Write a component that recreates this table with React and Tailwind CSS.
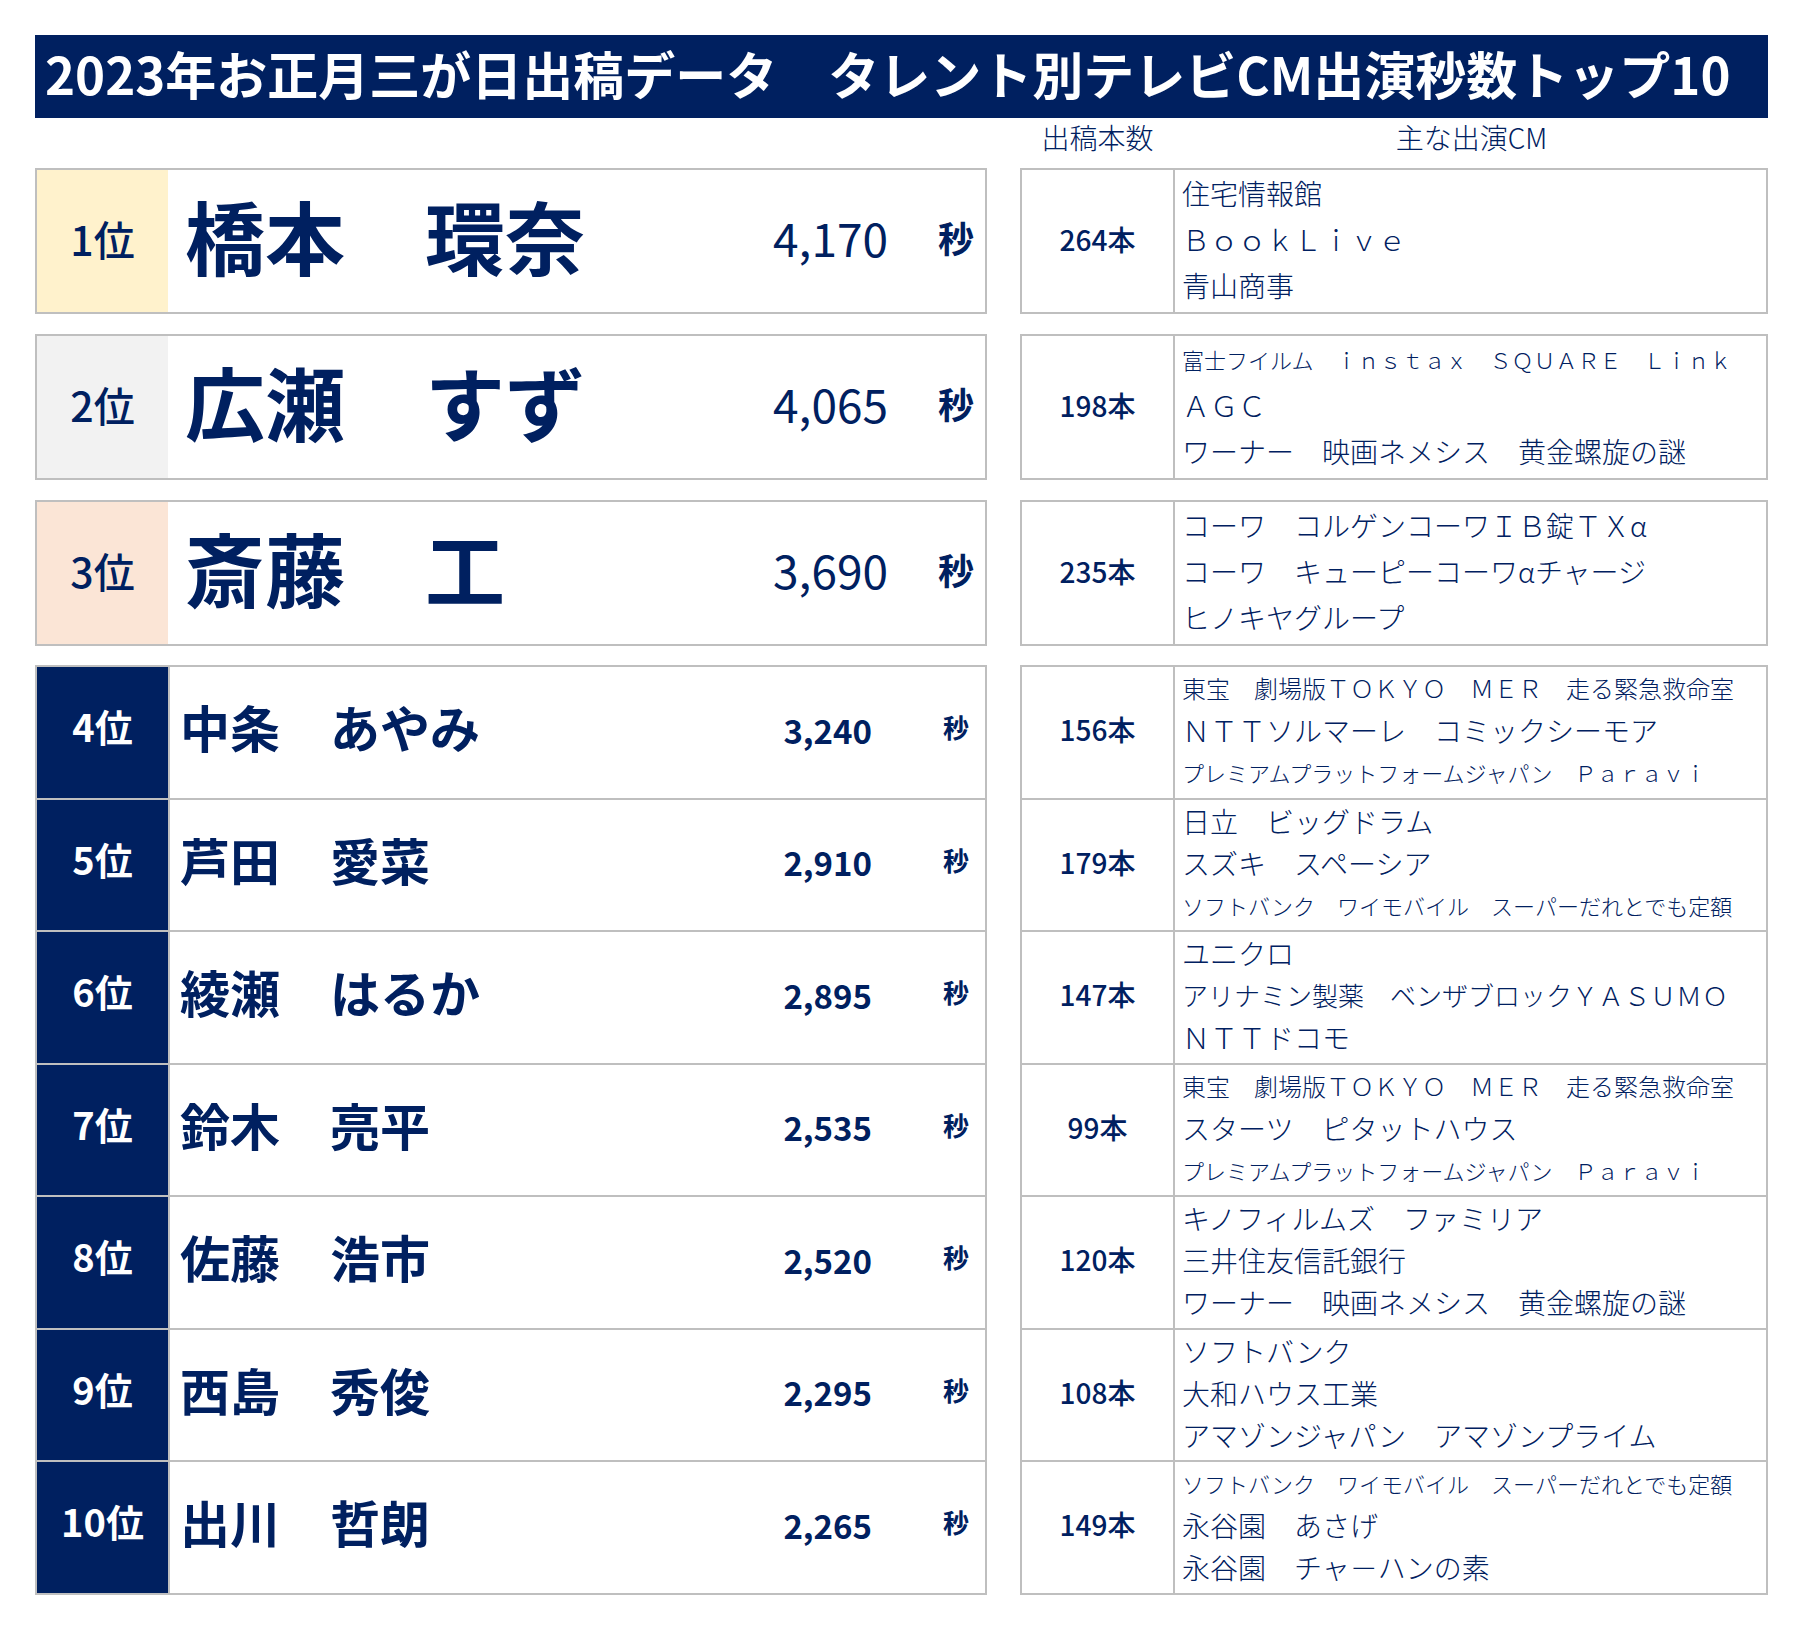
import React from "react";

const top3 = [
  {
    rank: "1位",
    bg: "bg-[#fff2cc]",
    name: "橋本　環奈",
    sec: "4,170",
    count: "264本",
    cms: [
      ["住宅情報館", "text-[28px]"],
      ["ＢｏｏｋＬｉｖｅ", "text-[28px]"],
      ["青山商事", "text-[28px]"],
    ],
  },
  {
    rank: "2位",
    bg: "bg-[#f2f2f2]",
    name: "広瀬　すず",
    sec: "4,065",
    count: "198本",
    cms: [
      ["富士フイルム　ｉｎｓｔａｘ　ＳＱＵＡＲＥ　Ｌｉｎｋ", "text-[22px]"],
      ["ＡＧＣ", "text-[28px]"],
      ["ワーナー　映画ネメシス　黄金螺旋の謎", "text-[28px]"],
    ],
  },
  {
    rank: "3位",
    bg: "bg-[#fbe5d6]",
    name: "斎藤　工",
    sec: "3,690",
    count: "235本",
    cms: [
      ["コーワ　コルゲンコーワＩＢ錠ＴＸα", "text-[28px]"],
      ["コーワ　キューピーコーワαチャージ", "text-[28px]"],
      ["ヒノキヤグループ", "text-[28px]"],
    ],
  },
];

const rest = [
  {
    rank: "4位",
    name: "中条　あやみ",
    sec: "3,240",
    count: "156本",
    cms: [
      ["東宝　劇場版ＴＯＫＹＯ　ＭＥＲ　走る緊急救命室", "text-[24px]"],
      ["ＮＴＴソルマーレ　コミックシーモア", "text-[28px]"],
      ["プレミアムプラットフォームジャパン　Ｐａｒａｖｉ", "text-[22px]"],
    ],
  },
  {
    rank: "5位",
    name: "芦田　愛菜",
    sec: "2,910",
    count: "179本",
    cms: [
      ["日立　ビッグドラム", "text-[28px]"],
      ["スズキ　スペーシア", "text-[28px]"],
      ["ソフトバンク　ワイモバイル　スーパーだれとでも定額", "text-[22px]"],
    ],
  },
  {
    rank: "6位",
    name: "綾瀬　はるか",
    sec: "2,895",
    count: "147本",
    cms: [
      ["ユニクロ", "text-[28px]"],
      ["アリナミン製薬　ベンザブロックＹＡＳＵＭＯ", "text-[26px]"],
      ["ＮＴＴドコモ", "text-[28px]"],
    ],
  },
  {
    rank: "7位",
    name: "鈴木　亮平",
    sec: "2,535",
    count: "99本",
    cms: [
      ["東宝　劇場版ＴＯＫＹＯ　ＭＥＲ　走る緊急救命室", "text-[24px]"],
      ["スターツ　ピタットハウス", "text-[28px]"],
      ["プレミアムプラットフォームジャパン　Ｐａｒａｖｉ", "text-[22px]"],
    ],
  },
  {
    rank: "8位",
    name: "佐藤　浩市",
    sec: "2,520",
    count: "120本",
    cms: [
      ["キノフィルムズ　ファミリア", "text-[28px]"],
      ["三井住友信託銀行", "text-[28px]"],
      ["ワーナー　映画ネメシス　黄金螺旋の謎", "text-[28px]"],
    ],
  },
  {
    rank: "9位",
    name: "西島　秀俊",
    sec: "2,295",
    count: "108本",
    cms: [
      ["ソフトバンク", "text-[28px]"],
      ["大和ハウス工業", "text-[28px]"],
      ["アマゾンジャパン　アマゾンプライム", "text-[28px]"],
    ],
  },
  {
    rank: "10位",
    name: "出川　哲朗",
    sec: "2,265",
    count: "149本",
    cms: [
      ["ソフトバンク　ワイモバイル　スーパーだれとでも定額", "text-[22px]"],
      ["永谷園　あさげ", "text-[28px]"],
      ["永谷園　チャ－ハンの素", "text-[28px]"],
    ],
  },
];

const CmLines = ({ cms }) => (
  <div className="flex-1 flex flex-col pl-[7px] pb-[4px] font-light">
    {cms.map(([text, size], i) => (
      <div
        key={i}
        className={`flex-1 flex items-center whitespace-nowrap leading-none ${size}`}
      >
        {text}
      </div>
    ))}
  </div>
);

const App = () => {
  return (
    <div className="w-[1812px] h-[1634px] bg-white pt-[35px] pl-[35px] font-['Noto_Sans_CJK_JP','Noto_Sans',sans-serif] text-[#002060]">
      {/* タイトル */}
      <div className="w-[1733px] h-[83px] bg-[#002060] flex items-center pl-[10px] pb-[6px] text-white font-bold text-[51px] leading-none whitespace-nowrap">
        2023年お正月三が日出稿データ　タレント別テレビCM出演秒数トップ10
      </div>

      {/* 見出し */}
      <div className="flex h-[50px] items-start pt-[5px] text-[28px] font-light leading-none">
        <div className="w-[985px]" />
        <div className="w-[155px] text-center">出稿本数</div>
        <div className="w-[593px] text-center">主な出演CM</div>
      </div>

      {/* 1〜3位 */}
      {top3.map((r) => (
        <div key={r.rank} className="flex gap-[33px] mb-[20px] h-[146px]">
          <div className="w-[952px] border-2 border-[#bfbfbf] flex items-stretch">
            <div
              className={`w-[131px] ${r.bg} flex items-center justify-center pb-[6px] text-[41px] font-medium leading-none`}
            >
              {r.rank}
            </div>
            <div className="flex-1 flex items-center pl-[17px] pb-[14px] text-[80px] font-bold leading-none whitespace-nowrap">
              {r.name}
            </div>
            <div className="flex items-center pb-[8px] text-[46px] leading-none">{r.sec}</div>
            <div className="w-[36px] ml-[50px] mr-[11px] flex items-center pb-[8px] text-[36px] font-bold leading-none">
              秒
            </div>
          </div>
          <div className="w-[748px] border-2 border-[#bfbfbf] flex">
            <div className="w-[153px] border-r-2 border-[#bfbfbf] flex items-center justify-center pb-[4px] text-[28px] font-medium leading-none">
              {r.count}
            </div>
            <CmLines cms={r.cms} />
          </div>
        </div>
      ))}

      {/* 4〜10位 */}
      <div className="flex gap-[33px] -mt-[1px]">
        <div className="w-[952px] border-x-2 border-t-2 border-[#bfbfbf]">
          {rest.map((r) => (
            <div key={r.rank} className="flex h-[132.5px] border-b-2 border-[#bfbfbf]">
              <div className="w-[133px] bg-[#002060] border-r-2 border-[#bfbfbf] flex items-center justify-center pb-[12px] text-white text-[38px] font-bold leading-none">
                {r.rank}
              </div>
              <div className="flex-1 flex items-center pl-[10px] pb-[12px] text-[50px] font-bold leading-none whitespace-nowrap">
                {r.name}
              </div>
              <div className="flex items-center pb-[4px] text-[33px] font-bold leading-none">
                {r.sec}
              </div>
              <div className="w-[26px] ml-[71px] mr-[16px] flex items-center pb-[10px] text-[26px] font-bold leading-none">
                秒
              </div>
            </div>
          ))}
        </div>
        <div className="w-[748px] border-x-2 border-t-2 border-[#bfbfbf]">
          {rest.map((r) => (
            <div key={r.rank} className="flex h-[132.5px] border-b-2 border-[#bfbfbf]">
              <div className="w-[153px] border-r-2 border-[#bfbfbf] flex items-center justify-center pb-[6px] text-[28px] font-medium leading-none">
                {r.count}
              </div>
              <CmLines cms={r.cms} />
            </div>
          ))}
        </div>
      </div>
    </div>
  );
};

export default App;
